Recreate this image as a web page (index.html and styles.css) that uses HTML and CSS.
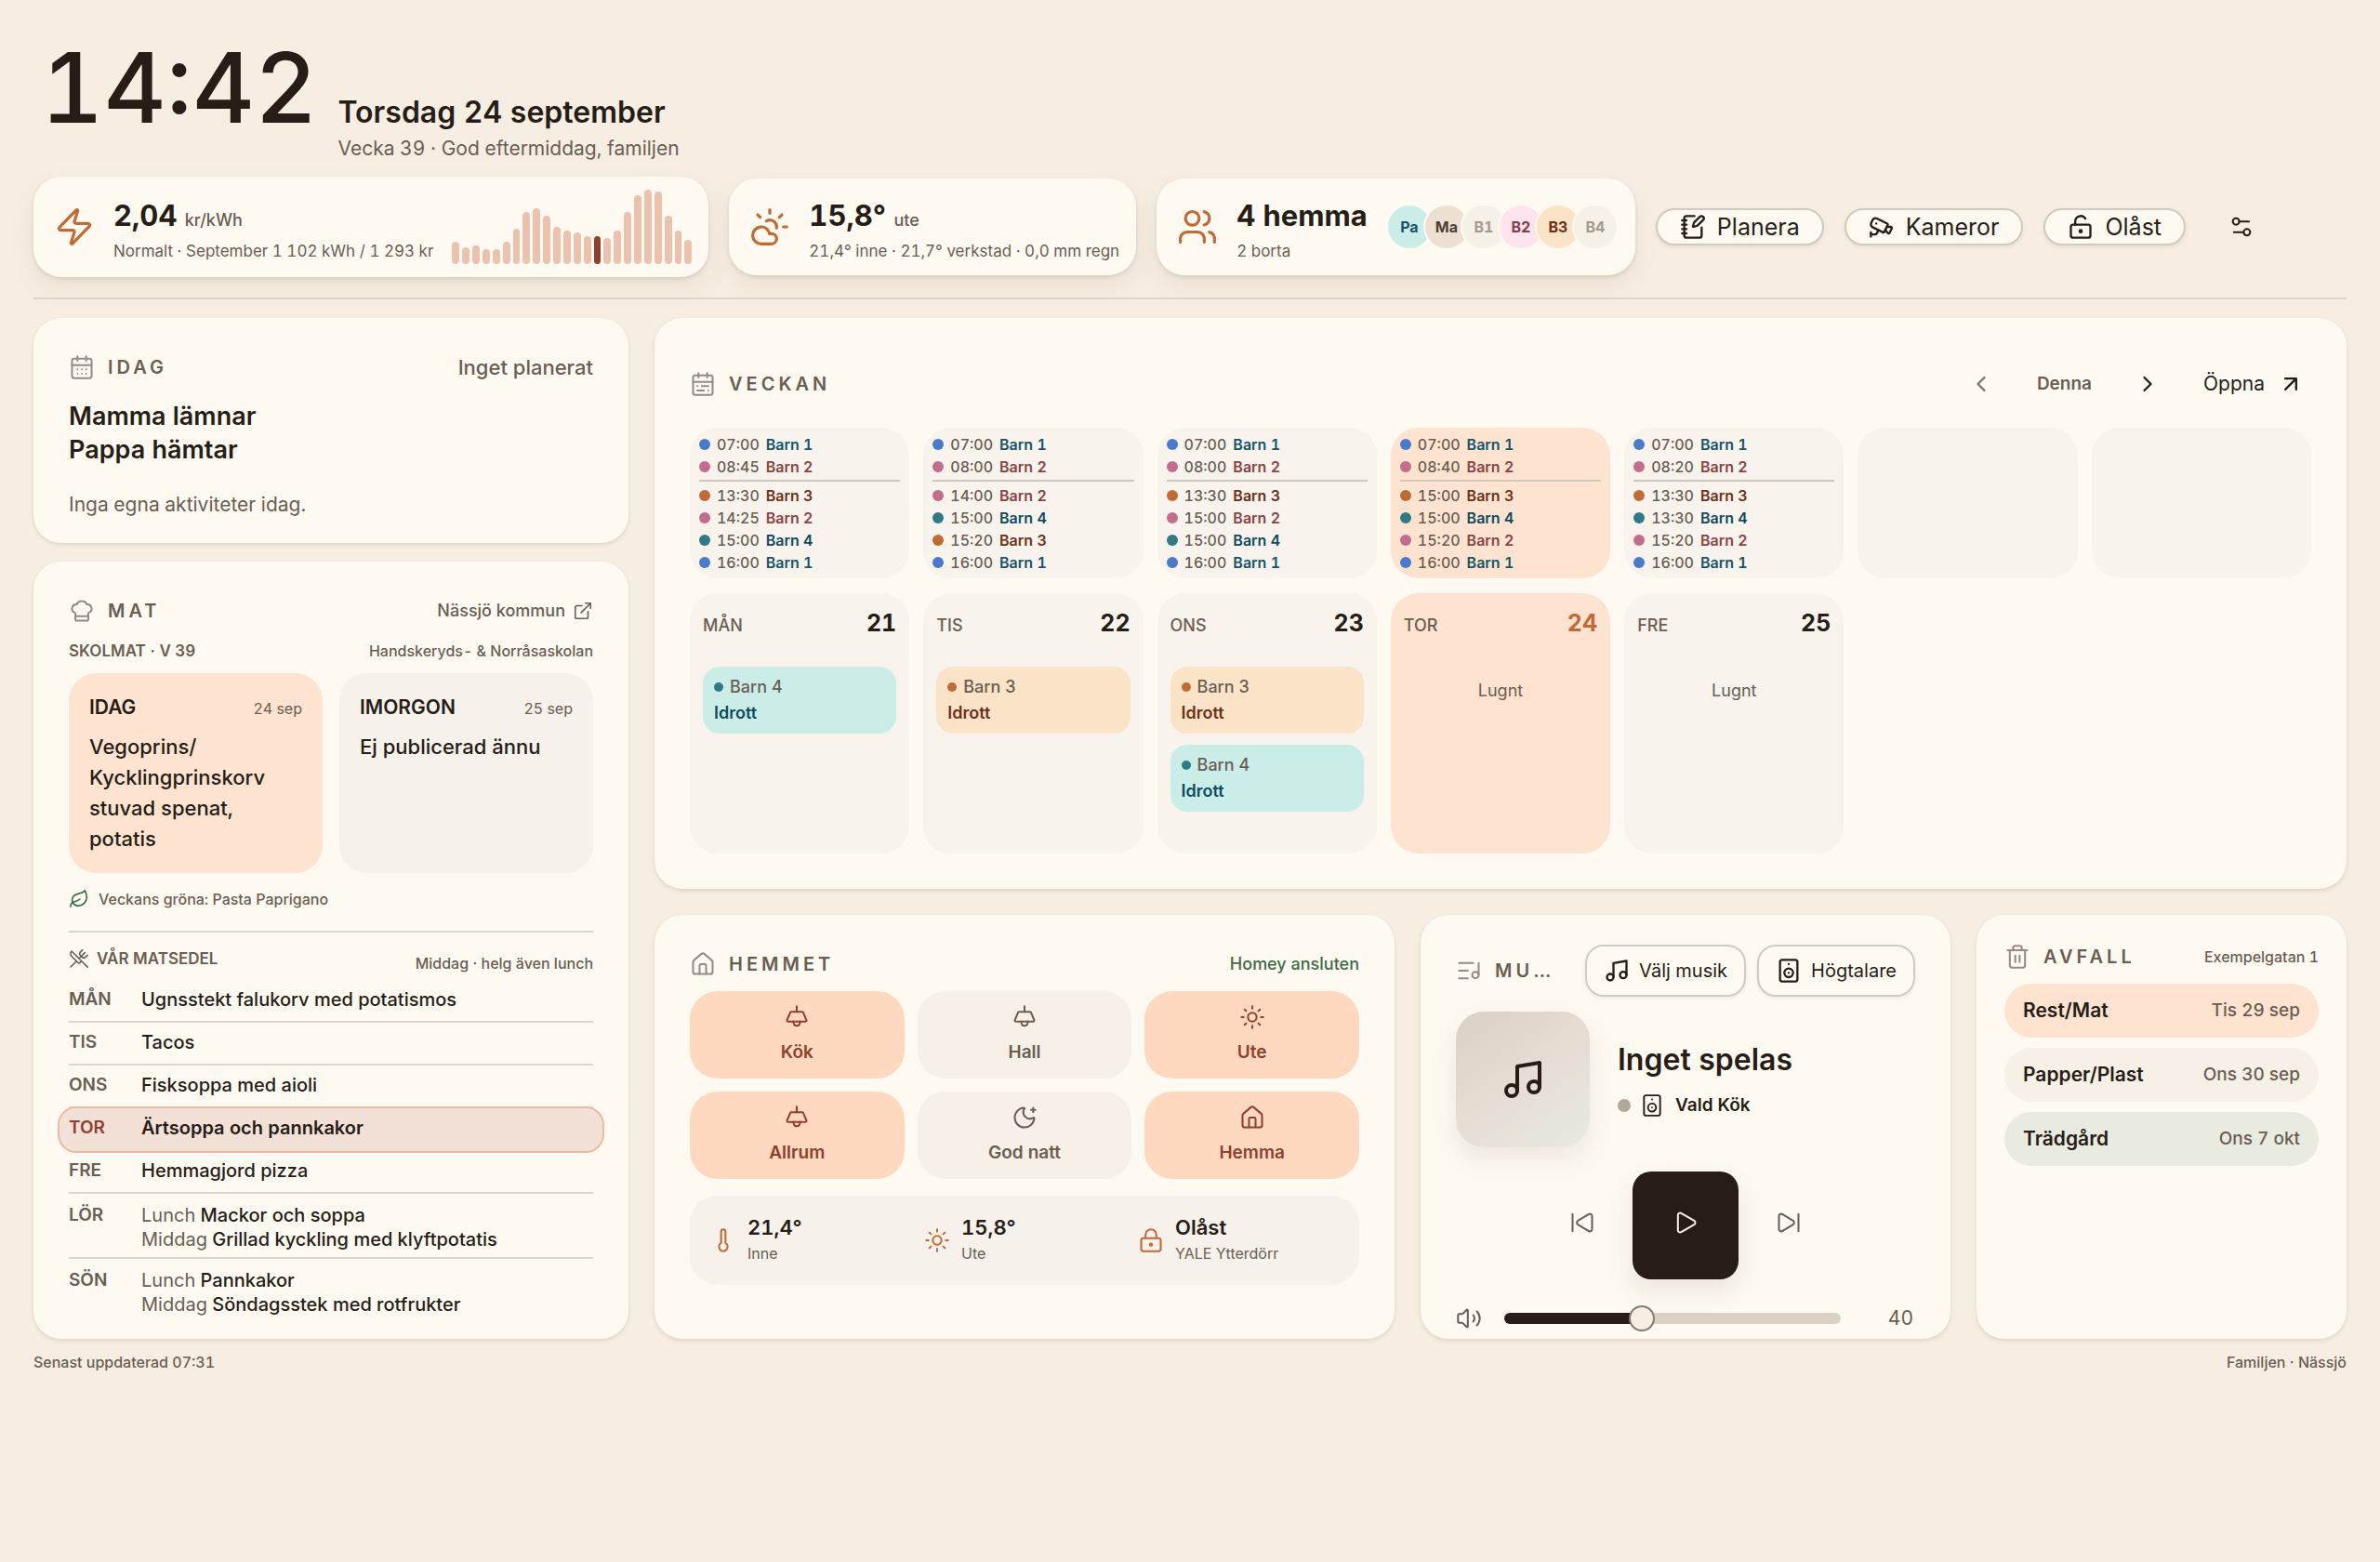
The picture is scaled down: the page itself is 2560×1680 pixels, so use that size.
FILE: index.html
```html
<!DOCTYPE html>
<html lang="sv">
<head>
    <meta charset="utf-8">
    <meta name="viewport" content="width=device-width, initial-scale=1">
    <title>Familjen</title>
    <link rel="stylesheet" href="styles.css">
</head>
<body>

<!-- Icon sprite -->
<svg class="sprite" aria-hidden="true">
    <symbol id="i-zap" viewBox="0 0 24 24"><path d="M4 14a1 1 0 0 1-.78-1.63l9.9-10.2a.5.5 0 0 1 .86.46l-1.92 6.02A1 1 0 0 0 13 10h7a1 1 0 0 1 .78 1.63l-9.9 10.2a.5.5 0 0 1-.86-.46l1.92-6.02A1 1 0 0 0 11 14z"/></symbol>
    <symbol id="i-cloud-sun" viewBox="0 0 24 24"><path d="M12 2v2M4.93 4.93l1.41 1.41M20 12h2M19.07 4.93l-1.41 1.41M15.947 12.65a4 4 0 0 0-5.925-4.128"/><path d="M13 22H7a5 5 0 1 1 4.9-6H13a3 3 0 0 1 0 6Z"/></symbol>
    <symbol id="i-users" viewBox="0 0 24 24"><path d="M16 21v-2a4 4 0 0 0-4-4H6a4 4 0 0 0-4 4v2"/><circle cx="9" cy="7" r="4"/><path d="M22 21v-2a4 4 0 0 0-3-3.87M16 3.13a4 4 0 0 1 0 7.75"/></symbol>
    <symbol id="i-notebook" viewBox="0 0 24 24"><path d="M13.4 2H6a2 2 0 0 0-2 2v16a2 2 0 0 0 2 2h12a2 2 0 0 0 2-2v-7.4M2 6h4M2 10h4M2 14h4M2 18h4"/><path d="M21.378 5.626a1 1 0 1 0-3.004-3.004l-5.01 5.012a2 2 0 0 0-.506.854l-.837 2.87a.5.5 0 0 0 .62.62l2.87-.837a2 2 0 0 0 .854-.506z"/></symbol>
    <symbol id="i-cctv" viewBox="0 0 24 24"><path d="M16.75 12h3.632a1 1 0 0 1 .894 1.447l-2.034 4.069a1 1 0 0 1-1.708.134l-2.124-2.97"/><path d="M17.106 9.053a1 1 0 0 1 .447 1.341l-3.106 6.211a1 1 0 0 1-1.342.447L3.61 12.3a2.92 2.92 0 0 1-1.3-3.91L3.69 5.6a2.92 2.92 0 0 1 3.92-1.3z"/><path d="M2 19h3.76a2 2 0 0 0 1.8-1.1L9 15M2 21v-4M7 9h.01"/></symbol>
    <symbol id="i-lock-open" viewBox="0 0 24 24"><circle cx="12" cy="16" r="1"/><rect width="18" height="12" x="3" y="10" rx="2"/><path d="M7 10V7a5 5 0 0 1 9.33-2.5"/></symbol>
    <symbol id="i-lock" viewBox="0 0 24 24"><circle cx="12" cy="16" r="1"/><rect width="18" height="12" x="3" y="10" rx="2"/><path d="M7 10V7a5 5 0 0 1 10 0v3"/></symbol>
    <symbol id="i-settings" viewBox="0 0 24 24"><path d="M14 17H5M19 7h-9"/><circle cx="17" cy="17" r="3"/><circle cx="7" cy="7" r="3"/></symbol>
    <symbol id="i-calendar" viewBox="0 0 24 24"><path d="M8 2v4M16 2v4M3 10h18"/><rect width="18" height="18" x="3" y="4" rx="2"/><path d="M8 14h.01M12 14h.01M16 14h.01M8 18h.01M12 18h.01M16 18h.01"/></symbol>
    <symbol id="i-calendar-range" viewBox="0 0 24 24"><path d="M8 2v4M16 2v4M3 10h18"/><rect width="18" height="18" x="3" y="4" rx="2"/><path d="M17 14h-6M13 18H7M7 14h.01M17 18h.01"/></symbol>
    <symbol id="i-chef" viewBox="0 0 24 24"><path d="M17 21a1 1 0 0 0 1-1v-5.35c0-.457.316-.844.727-1.041a4 4 0 0 0-2.134-7.589 5 5 0 0 0-9.186 0 4 4 0 0 0-2.134 7.588c.411.198.727.585.727 1.041V20a1 1 0 0 0 1 1ZM6 17h12"/></symbol>
    <symbol id="i-external" viewBox="0 0 24 24"><path d="M15 3h6v6M10 14 21 3M18 13v6a2 2 0 0 1-2 2H5a2 2 0 0 1-2-2V8a2 2 0 0 1 2-2h6"/></symbol>
    <symbol id="i-leaf" viewBox="0 0 24 24"><path d="M11 20A7 7 0 0 1 9.8 6.1C15.5 5 17 4.48 19 2c1 2 2 4.18 2 8 0 5.5-4.78 10-10 10Z"/><path d="M2 21c0-3 1.85-5.36 5.08-6C9.5 14.52 12 13 13 12"/></symbol>
    <symbol id="i-utensils" viewBox="0 0 24 24"><path d="m16 2-2.3 2.3a3 3 0 0 0 0 4.2l1.8 1.8a3 3 0 0 0 4.2 0L22 8"/><path d="M15 15 3.3 3.3a4.2 4.2 0 0 0 0 6l7.3 7.3c.7.7 2 .7 2.8 0L15 15Zm0 0 7 7M2.1 21.8l6.4-6.3M19 5l-7 7"/></symbol>
    <symbol id="i-left" viewBox="0 0 24 24"><path d="m15 18-6-6 6-6"/></symbol>
    <symbol id="i-right" viewBox="0 0 24 24"><path d="m9 18 6-6-6-6"/></symbol>
    <symbol id="i-arrow" viewBox="0 0 24 24"><path d="M7 7h10v10M7 17 17 7"/></symbol>
    <symbol id="i-house" viewBox="0 0 24 24"><path d="M15 21v-8a1 1 0 0 0-1-1h-4a1 1 0 0 0-1 1v8"/><path d="M3 10a2 2 0 0 1 .709-1.528l7-5.999a2 2 0 0 1 2.582 0l7 5.999A2 2 0 0 1 21 10v9a2 2 0 0 1-2 2H5a2 2 0 0 1-2-2z"/></symbol>
    <symbol id="i-lamp" viewBox="0 0 24 24"><path d="M12 2v5M14.829 15.998a3 3 0 1 1-5.658 0"/><path d="M20.92 14.606A1 1 0 0 1 20 16H4a1 1 0 0 1-.92-1.394l3-7A1 1 0 0 1 7 7h10a1 1 0 0 1 .92.606z"/></symbol>
    <symbol id="i-sun" viewBox="0 0 24 24"><circle cx="12" cy="12" r="4"/><path d="M12 2v2M12 20v2M4.93 4.93l1.41 1.41M17.66 17.66l1.41 1.41M2 12h2M20 12h2M6.34 17.66l-1.41 1.41M19.07 4.93l-1.41 1.41"/></symbol>
    <symbol id="i-moon" viewBox="0 0 24 24"><path d="M18 5h4M20 3v4M20.985 12.486a9 9 0 1 1-9.473-9.472c.405-.022.617.46.402.803a6 6 0 0 0 8.268 8.268c.344-.215.825-.004.803.401"/></symbol>
    <symbol id="i-thermo" viewBox="0 0 24 24"><path d="M14 4v10.54a4 4 0 1 1-4 0V4a2 2 0 0 1 4 0Z"/></symbol>
    <symbol id="i-list-music" viewBox="0 0 24 24"><path d="M16 5H3M11 12H3M11 19H3M21 16V5"/><circle cx="18" cy="16" r="3"/></symbol>
    <symbol id="i-music" viewBox="0 0 24 24"><path d="M9 18V5l12-2v13"/><circle cx="6" cy="18" r="3"/><circle cx="18" cy="16" r="3"/></symbol>
    <symbol id="i-speaker" viewBox="0 0 24 24"><rect width="16" height="20" x="4" y="2" rx="2"/><path d="M12 6h.01M12 14h.01"/><circle cx="12" cy="14" r="4"/></symbol>
    <symbol id="i-prev" viewBox="0 0 24 24"><path d="M17.971 4.285A2 2 0 0 1 21 6v12a2 2 0 0 1-3.029 1.715l-9.997-5.998a2 2 0 0 1-.003-3.432zM3 20V4"/></symbol>
    <symbol id="i-next" viewBox="0 0 24 24"><path d="M6.029 4.285A2 2 0 0 0 3 6v12a2 2 0 0 0 3.029 1.715l9.997-5.998a2 2 0 0 0 .003-3.432zM21 4v16"/></symbol>
    <symbol id="i-play" viewBox="0 0 24 24"><path d="M5 5a2 2 0 0 1 3.008-1.728l11.997 6.998a2 2 0 0 1 .003 3.458l-12 7A2 2 0 0 1 5 19z"/></symbol>
    <symbol id="i-volume" viewBox="0 0 24 24"><path d="M11 4.702a.705.705 0 0 0-1.203-.498L6.413 7.587A1.4 1.4 0 0 1 5.416 8H3a1 1 0 0 0-1 1v6a1 1 0 0 0 1 1h2.416a1.4 1.4 0 0 1 .997.413l3.383 3.384A.705.705 0 0 0 11 19.298zM16 9a5 5 0 0 1 0 6M19.364 18.364a9 9 0 0 0 0-12.728"/></symbol>
    <symbol id="i-trash" viewBox="0 0 24 24"><path d="M10 11v6M14 11v6M19 6v14a2 2 0 0 1-2 2H7a2 2 0 0 1-2-2V6M3 6h18M8 6V4a2 2 0 0 1 2-2h4a2 2 0 0 1 2 2v2"/></symbol>
</svg>

<div class="page">

    <!-- Clock and status chips -->
    <header class="top">
        <div class="now">
            <time class="clock">14:42</time>
            <div class="date">
                <h1>Torsdag 24 september</h1>
                <p>Vecka 39 · God eftermiddag, familjen</p>
            </div>
        </div>

        <div class="status">
            <section class="chip chip-power">
                <svg class="icon icon-chip"><use href="#i-zap"/></svg>
                <div class="chip-text">
                    <p class="chip-value">2,04 <small>kr/kWh</small></p>
                    <p class="chip-sub">Normalt · September 1 102 kWh / 1 293 kr</p>
                </div>
                <div class="bars">
                    <span style="height:30%"></span><span style="height:22%"></span><span style="height:25%"></span><span style="height:20%"></span><span style="height:20%"></span><span style="height:30%"></span><span style="height:48%"></span><span style="height:70%"></span><span style="height:75%"></span><span style="height:65%"></span><span style="height:50%"></span><span style="height:45%"></span><span style="height:43%"></span><span style="height:38%"></span><span class="now-bar" style="height:38%"></span><span style="height:35%"></span><span style="height:45%"></span><span style="height:70%"></span><span style="height:92%"></span><span style="height:100%"></span><span style="height:97%"></span><span style="height:65%"></span><span style="height:45%"></span><span style="height:32%"></span>
                </div>
            </section>

            <section class="chip">
                <svg class="icon icon-chip"><use href="#i-cloud-sun"/></svg>
                <div class="chip-text">
                    <p class="chip-value">15,8° <small>ute</small></p>
                    <p class="chip-sub">21,4° inne · 21,7° verkstad · 0,0 mm regn</p>
                </div>
            </section>

            <section class="chip">
                <svg class="icon icon-chip"><use href="#i-users"/></svg>
                <div class="chip-text">
                    <p class="chip-value">4 hemma</p>
                    <p class="chip-sub">2 borta</p>
                </div>
                <div class="people">
                    <span class="person teal">Pa</span>
                    <span class="person sand">Ma</span>
                    <span class="person away">B1</span>
                    <span class="person pink">B2</span>
                    <span class="person amber">B3</span>
                    <span class="person away">B4</span>
                </div>
            </section>

            <button class="pill" type="button"><svg class="icon"><use href="#i-notebook"/></svg>Planera</button>
            <button class="pill" type="button"><svg class="icon"><use href="#i-cctv"/></svg>Kameror</button>
            <button class="pill" type="button"><svg class="icon"><use href="#i-lock-open"/></svg>Olåst</button>
            <button class="ghost" type="button" aria-label="Inställningar"><svg class="icon"><use href="#i-settings"/></svg></button>
        </div>
    </header>

    <main class="board">
        <div class="side">

            <section class="card today">
                <div class="card-head">
                    <h2><svg class="icon"><use href="#i-calendar"/></svg>IDAG</h2>
                    <span class="head-note big">Inget planerat</span>
                </div>
                <p class="who">Mamma lämnar</p>
                <p class="who">Pappa hämtar</p>
                <p class="none">Inga egna aktiviteter idag.</p>
            </section>

            <section class="card food">
                <div class="card-head">
                    <h2><svg class="icon"><use href="#i-chef"/></svg>MAT</h2>
                    <a class="head-link" href="#">Nässjö kommun <svg class="icon"><use href="#i-external"/></svg></a>
                </div>
                <div class="sub-head">
                    <h3>SKOLMAT · V 39</h3>
                    <span>Handskeryds- &amp; Norråsaskolan</span>
                </div>
                <div class="school">
                    <article class="meal is-today">
                        <header><h4>IDAG</h4><time>24 sep</time></header>
                        <p>Vegoprins/<wbr> Kycklingprinskorv stuvad spenat, potatis</p>
                    </article>
                    <article class="meal">
                        <header><h4>IMORGON</h4><time>25 sep</time></header>
                        <p>Ej publicerad ännu</p>
                    </article>
                </div>
                <p class="green"><svg class="icon"><use href="#i-leaf"/></svg>Veckans gröna: Pasta Paprigano</p>

                <div class="sub-head ours">
                    <h3><svg class="icon"><use href="#i-utensils"/></svg>VÅR MATSEDEL</h3>
                    <span>Middag · helg även lunch</span>
                </div>
                <ul class="menu">
                    <li><b>MÅN</b><div>Ugnsstekt falukorv med potatismos</div></li>
                    <li><b>TIS</b><div>Tacos</div></li>
                    <li><b>ONS</b><div>Fisksoppa med aioli</div></li>
                    <li class="is-today"><b>TOR</b><div>Ärtsoppa och pannkakor</div></li>
                    <li><b>FRE</b><div>Hemmagjord pizza</div></li>
                    <li class="weekend"><b>LÖR</b><div><span>Lunch</span> Mackor och soppa<br><span>Middag</span> Grillad kyckling med klyftpotatis</div></li>
                    <li class="weekend"><b>SÖN</b><div><span>Lunch</span> Pannkakor<br><span>Middag</span> Söndagsstek med rotfrukter</div></li>
                </ul>
            </section>
        </div>

        <div class="content">

            <section class="card week">
                <div class="card-head">
                    <h2><svg class="icon"><use href="#i-calendar-range"/></svg>VECKAN</h2>
                    <nav class="week-nav">
                        <button type="button" aria-label="Föregående vecka" disabled><svg class="icon"><use href="#i-left"/></svg></button>
                        <button class="this-week" type="button">Denna</button>
                        <button type="button" aria-label="Nästa vecka"><svg class="icon"><use href="#i-right"/></svg></button>
                        <a href="#">Öppna <svg class="icon"><use href="#i-arrow"/></svg></a>
                    </nav>
                </div>

                <div class="days">
                    <ul class="times">
                        <li class="b1"><time>07:00</time><b>Barn 1</b></li>
                        <li class="b2"><time>08:45</time><b>Barn 2</b></li>
                        <li class="b3 split"><time>13:30</time><b>Barn 3</b></li>
                        <li class="b2"><time>14:25</time><b>Barn 2</b></li>
                        <li class="b4"><time>15:00</time><b>Barn 4</b></li>
                        <li class="b1"><time>16:00</time><b>Barn 1</b></li>
                    </ul>
                    <ul class="times">
                        <li class="b1"><time>07:00</time><b>Barn 1</b></li>
                        <li class="b2"><time>08:00</time><b>Barn 2</b></li>
                        <li class="b2 split"><time>14:00</time><b>Barn 2</b></li>
                        <li class="b4"><time>15:00</time><b>Barn 4</b></li>
                        <li class="b3"><time>15:20</time><b>Barn 3</b></li>
                        <li class="b1"><time>16:00</time><b>Barn 1</b></li>
                    </ul>
                    <ul class="times">
                        <li class="b1"><time>07:00</time><b>Barn 1</b></li>
                        <li class="b2"><time>08:00</time><b>Barn 2</b></li>
                        <li class="b3 split"><time>13:30</time><b>Barn 3</b></li>
                        <li class="b2"><time>15:00</time><b>Barn 2</b></li>
                        <li class="b4"><time>15:00</time><b>Barn 4</b></li>
                        <li class="b1"><time>16:00</time><b>Barn 1</b></li>
                    </ul>
                    <ul class="times is-today">
                        <li class="b1"><time>07:00</time><b>Barn 1</b></li>
                        <li class="b2"><time>08:40</time><b>Barn 2</b></li>
                        <li class="b3 split"><time>15:00</time><b>Barn 3</b></li>
                        <li class="b4"><time>15:00</time><b>Barn 4</b></li>
                        <li class="b2"><time>15:20</time><b>Barn 2</b></li>
                        <li class="b1"><time>16:00</time><b>Barn 1</b></li>
                    </ul>
                    <ul class="times">
                        <li class="b1"><time>07:00</time><b>Barn 1</b></li>
                        <li class="b2"><time>08:20</time><b>Barn 2</b></li>
                        <li class="b3 split"><time>13:30</time><b>Barn 3</b></li>
                        <li class="b4"><time>13:30</time><b>Barn 4</b></li>
                        <li class="b2"><time>15:20</time><b>Barn 2</b></li>
                        <li class="b1"><time>16:00</time><b>Barn 1</b></li>
                    </ul>
                    <div class="times"></div>
                    <div class="times"></div>

                    <article class="day">
                        <header><span>MÅN</span><strong>21</strong></header>
                        <div class="event b4"><p>Barn 4</p><b>Idrott</b></div>
                    </article>
                    <article class="day">
                        <header><span>TIS</span><strong>22</strong></header>
                        <div class="event b3"><p>Barn 3</p><b>Idrott</b></div>
                    </article>
                    <article class="day">
                        <header><span>ONS</span><strong>23</strong></header>
                        <div class="event b3"><p>Barn 3</p><b>Idrott</b></div>
                        <div class="event b4"><p>Barn 4</p><b>Idrott</b></div>
                    </article>
                    <article class="day is-today">
                        <header><span>TOR</span><strong>24</strong></header>
                        <p class="calm">Lugnt</p>
                    </article>
                    <article class="day">
                        <header><span>FRE</span><strong>25</strong></header>
                        <p class="calm">Lugnt</p>
                    </article>
                </div>
            </section>

            <div class="bottom">

                <section class="card home">
                    <div class="card-head">
                        <h2><svg class="icon"><use href="#i-house"/></svg>HEMMET</h2>
                        <span class="online">Homey ansluten</span>
                    </div>
                    <div class="tiles">
                        <button class="tile on" type="button"><svg class="icon"><use href="#i-lamp"/></svg>Kök</button>
                        <button class="tile" type="button"><svg class="icon"><use href="#i-lamp"/></svg>Hall</button>
                        <button class="tile on" type="button"><svg class="icon"><use href="#i-sun"/></svg>Ute</button>
                        <button class="tile on" type="button"><svg class="icon"><use href="#i-lamp"/></svg>Allrum</button>
                        <button class="tile" type="button"><svg class="icon"><use href="#i-moon"/></svg>God natt</button>
                        <button class="tile on" type="button"><svg class="icon"><use href="#i-house"/></svg>Hemma</button>
                    </div>
                    <div class="sensors">
                        <div><svg class="icon"><use href="#i-thermo"/></svg><p><b>21,4°</b><span>Inne</span></p></div>
                        <div><svg class="icon"><use href="#i-sun"/></svg><p><b>15,8°</b><span>Ute</span></p></div>
                        <div><svg class="icon"><use href="#i-lock"/></svg><p><b>Olåst</b><span>YALE Ytterdörr</span></p></div>
                    </div>
                </section>

                <section class="card music">
                    <div class="card-head">
                        <h2><svg class="icon"><use href="#i-list-music"/></svg><span>MUSIK</span></h2>
                        <div class="music-buttons">
                            <button type="button"><svg class="icon"><use href="#i-music"/></svg>Välj musik</button>
                            <button type="button"><svg class="icon"><use href="#i-speaker"/></svg>Högtalare</button>
                        </div>
                    </div>
                    <div class="track">
                        <div class="cover"><svg class="icon"><use href="#i-music"/></svg></div>
                        <div>
                            <h3>Inget spelas</h3>
                            <p><i class="dot"></i><svg class="icon"><use href="#i-speaker"/></svg>Vald Kök</p>
                        </div>
                    </div>
                    <div class="controls">
                        <button type="button" aria-label="Föregående"><svg class="icon"><use href="#i-prev"/></svg></button>
                        <button class="play" type="button" aria-label="Spela"><svg class="icon"><use href="#i-play"/></svg></button>
                        <button type="button" aria-label="Nästa"><svg class="icon"><use href="#i-next"/></svg></button>
                    </div>
                    <div class="volume">
                        <label for="volume" aria-label="Volym"><svg class="icon"><use href="#i-volume"/></svg></label>
                        <input id="volume" type="range" min="0" max="100" value="40">
                        <output for="volume">40</output>
                    </div>
                </section>

                <section class="card waste">
                    <div class="card-head">
                        <h2><svg class="icon"><use href="#i-trash"/></svg>AVFALL</h2>
                        <span class="head-note">Exempelgatan 1</span>
                    </div>
                    <ul>
                        <li class="next"><b>Rest/Mat</b><time>Tis 29 sep</time></li>
                        <li><b>Papper/Plast</b><time>Ons 30 sep</time></li>
                        <li class="garden"><b>Trädgård</b><time>Ons 7 okt</time></li>
                    </ul>
                </section>
            </div>
        </div>
    </main>

    <footer class="foot">
        <span>Senast uppdaterad 07:31</span>
        <span>Familjen · Nässjö</span>
    </footer>
</div>

</body>
</html>
```
FILE: styles.css
```css
:root {
    --bg: #f7eee3;
    --card: #fefaf2;
    --ink: #261d17;
    --muted: #6a5d52;
    --line: #dfd6cb;
    --soft: #f8f3ec;
    --peach: #fee3d1;
    --rust: #c06a35;
    --brick: #8f3f2d;
    --teal: #cbede8;
    --amber: #fae3c7;
}

* {
    box-sizing: border-box;
}

body {
    margin: 0;
    background: var(--bg);
    color: var(--ink);
    font-family: Inter, "Open Sans", sans-serif;
    font-size: 18px;
    line-height: 24px;
    font-variant-numeric: tabular-nums;
}

h1, h2, h3, h4, p, ul {
    margin: 0;
    padding: 0;
    font-weight: inherit;
}

ul {
    list-style: none;
}

a {
    color: inherit;
    text-decoration: none;
}

button {
    padding: 0;
    border: 0;
    background: none;
    color: inherit;
    font: inherit;
    cursor: pointer;
}

.sprite {
    display: none;
}

.icon {
    flex: none;
    width: 28px;
    height: 28px;
    fill: none;
    stroke: currentColor;
    stroke-width: 1.75;
    stroke-linecap: round;
    stroke-linejoin: round;
}

.page {
    padding: 38px 36px 0;
}

/* Clock and status chips */
.top {
    padding-bottom: 22px;
    border-bottom: 2px solid var(--line);
    margin-bottom: 20px;
}

.now {
    display: flex;
    align-items: baseline;
    gap: 22px;
    height: 152px;
    padding-left: 8px;
}

.clock {
    font-size: 104px;
    line-height: 112px;
    font-weight: 500;
}

.date h1 {
    font-size: 32px;
    line-height: 40px;
    font-weight: 600;
}

.date p {
    color: var(--muted);
    font-size: 21px;
    line-height: 38px;
}

.status {
    display: flex;
    align-items: center;
    gap: 22px;
}

.chip {
    display: flex;
    align-items: center;
    gap: 20px;
    min-height: 104px;
    padding: 12px 18px 12px 22px;
    border-radius: 30px;
    background: var(--card);
    box-shadow: 0 2px 4px rgba(90, 60, 40, .14), 0 12px 28px rgba(90, 60, 40, .08);
    white-space: nowrap;
}

.chip-power {
    padding-top: 14px;
    padding-bottom: 14px;
}

.icon-chip {
    width: 44px;
    height: 44px;
    color: var(--rust);
}

.chip-text {
    display: grid;
    gap: 8px;
    padding-top: 8px;
}

.chip-value {
    font-size: 31px;
    line-height: 36px;
    font-weight: 700;
}

.chip-value small {
    color: var(--muted);
    font-size: 18px;
    line-height: 18px;
    font-weight: 500;
}

.chip-sub {
    color: var(--muted);
    font-size: 17px;
    line-height: 24px;
}

.bars {
    display: flex;
    align-items: flex-end;
    gap: 3px;
    width: 258px;
    height: 80px;
}

.bars span {
    flex: 1;
    border-radius: 4px;
    background: #eac2ae;
}

.bars .now-bar {
    background: var(--brick);
}

.people {
    display: flex;
}

.person {
    width: 50px;
    height: 50px;
    margin-right: -10px;
    border: 2px solid var(--card);
    border-radius: 50%;
    font-size: 16px;
    line-height: 46px;
    font-weight: 700;
    text-align: center;
}

.person:last-child {
    margin-right: 0;
}

.person.teal { background: var(--teal); color: #14556a; }
.person.sand { background: #eedfd3; color: #4d4036; }
.person.pink { background: #ffe3ee; color: #7d4248; }
.person.amber { background: var(--amber); color: #6f2f17; }
.person.away { background: #f5f1e7; color: #a39b90; }

.pill {
    display: flex;
    align-items: center;
    gap: 12px;
    height: 40px;
    padding: 0 24px;
    border: 2px solid #d3c9bd;
    border-radius: 20px;
    background: var(--card);
    box-shadow: 0 2px 4px rgba(90, 60, 40, .1);
    font-size: 25px;
}

.pill .icon,
.music-buttons .icon {
    stroke-width: 2;
}

.ghost {
    display: flex;
    padding: 8px 24px;
}

/* Board */
.board {
    display: grid;
    grid-template-columns: minmax(0, 32fr) minmax(0, 91fr);
    gap: 28px;
}

.side {
    display: flex;
    flex-direction: column;
    gap: 20px;
}

.content {
    display: grid;
    grid-template-rows: auto 1fr;
    gap: 28px;
}

.card {
    padding: 38px;
    border-radius: 30px;
    background: var(--card);
    box-shadow: 0 2px 4px rgba(90, 60, 40, .16);
}

.card-head {
    display: flex;
    align-items: center;
    justify-content: space-between;
    gap: 16px;
}

.card-head h2 {
    display: flex;
    align-items: center;
    gap: 14px;
    color: var(--muted);
    font-size: 20px;
    line-height: 30px;
    font-weight: 600;
    letter-spacing: 4px;
}

.card-head h2 .icon {
    opacity: .7;
}

.head-note {
    color: var(--muted);
    font-size: 16px;
    font-weight: 500;
}

.head-note.big {
    font-size: 22px;
}

/* Today */
.today {
    padding-bottom: 24px;
}

.who {
    font-size: 27px;
    line-height: 36px;
    font-weight: 600;
}

.today .card-head {
    margin-bottom: 20px;
}

.none {
    margin-top: 24px;
    color: var(--muted);
    font-size: 21px;
    line-height: 34px;
}

/* Food */
.food {
    flex: 1;
    padding-bottom: 15px;
}

.head-link {
    display: flex;
    align-items: center;
    gap: 8px;
    color: var(--muted);
    font-size: 18px;
    font-weight: 500;
}

.head-link .icon {
    width: 22px;
    height: 22px;
}

.sub-head {
    display: flex;
    align-items: baseline;
    justify-content: space-between;
    margin-top: 16px;
    color: var(--muted);
    font-size: 16px;
    font-weight: 500;
}

.sub-head h3 {
    display: flex;
    align-items: center;
    gap: 8px;
    font-size: 17px;
    font-weight: 600;
}

.sub-head .icon,
.green .icon {
    width: 22px;
    height: 22px;
}

.school {
    display: grid;
    grid-template-columns: 1fr 1fr;
    gap: 18px;
    margin-top: 12px;
}

.meal {
    padding: 22px 22px 20px;
    border-radius: 30px;
    background: #f6f1eb;
}

.meal.is-today {
    background: var(--peach);
}

.meal header {
    display: flex;
    align-items: baseline;
    justify-content: space-between;
    margin-bottom: 10px;
    line-height: 30px;
}

.meal h4 {
    font-size: 21px;
    font-weight: 600;
}

.meal time {
    color: var(--muted);
    font-size: 16px;
}

.meal p {
    font-size: 22px;
    line-height: 33px;
    font-weight: 500;
}

.green {
    display: flex;
    align-items: center;
    gap: 10px;
    margin-top: 16px;
    color: var(--muted);
    font-size: 16px;
    font-weight: 500;
}

.green .icon {
    color: #2f6b3c;
}

.sub-head.ours {
    margin-top: 22px;
    padding-top: 16px;
    border-top: 2px solid var(--line);
}

.menu {
    margin-top: 6px;
}

.menu li {
    display: grid;
    grid-template-columns: 78px 1fr;
    min-height: 46px;
    padding-top: 8px;
    border-bottom: 2px solid var(--line);
    font-size: 20px;
    line-height: 26px;
    font-weight: 500;
}

.menu li:last-child {
    border-bottom: 0;
}

.menu b {
    color: var(--muted);
    font-size: 19px;
    font-weight: 600;
}

.menu span {
    color: var(--muted);
    font-weight: 400;
}

.menu .is-today {
    margin: -2px -12px;
    min-height: 50px;
    padding: 8px 10px 0;
    border: 2px solid #e8bba5;
    border-radius: 20px;
    background: #f3e1d7;
    font-weight: 600;
}

.menu .is-today b {
    color: var(--brick);
}

.menu .weekend {
    padding: 10px 0 6px;
}

/* Week */
.week .card-head {
    min-height: 66px;
}

.week-nav {
    display: flex;
    align-items: center;
    gap: 46px;
    padding-right: 8px;
    font-size: 21px;
}

.week-nav button {
    display: flex;
}

.week-nav button:disabled {
    opacity: .6;
}

.week-nav .this-week {
    color: var(--muted);
    font-size: 19px;
    font-weight: 600;
}

.week-nav .icon {
    stroke-width: 2;
}

.week-nav a {
    display: flex;
    align-items: center;
    gap: 14px;
}

.days {
    display: grid;
    grid-template-columns: repeat(7, minmax(0, 1fr));
    gap: 16px 15px;
    margin-top: 14px;
}

.times {
    min-height: 162px;
    padding: 6px 10px 5px;
    border-radius: 30px;
    background: var(--soft);
    font-size: 16px;
    line-height: 24px;
}

.times li {
    display: flex;
    align-items: center;
    gap: 7px;
}

.times li::before,
.event p::before {
    content: "";
    width: 12px;
    height: 12px;
    border-radius: 50%;
    background: var(--who);
}

.times time {
    color: var(--muted);
    font-weight: 500;
}

.times b {
    color: var(--name);
    font-weight: 600;
}

.times .split {
    margin-top: 2px;
    padding-top: 3px;
    border-top: 2px solid #d0c7bb;
}

.b1 { --who: #4a7acb; --name: #14556a; }
.b2 { --who: #c26c8e; --name: #8a4344; }
.b3 { --who: #c06a35; --name: #6f2f17; --fill: var(--amber); }
.b4 { --who: #2f7a86; --name: #0f4a60; --fill: var(--teal); }

.day {
    min-height: 280px;
    padding: 16px 14px;
    border-radius: 30px;
    background: var(--soft);
}

.times.is-today,
.day.is-today {
    background: var(--peach);
}

.day header {
    display: flex;
    align-items: baseline;
    justify-content: space-between;
    margin-bottom: 28px;
    line-height: 32px;
}

.day header span {
    color: var(--muted);
    font-weight: 500;
}

.day header strong {
    font-size: 25px;
    font-weight: 700;
}

.day.is-today strong {
    color: var(--rust);
}

.event {
    padding: 8px 12px;
    border-radius: 18px;
    background: var(--fill);
    color: var(--name);
    font-size: 18px;
    line-height: 28px;
}

.event + .event {
    margin-top: 12px;
}

.event p {
    display: flex;
    align-items: center;
    gap: 7px;
    color: var(--muted);
    font-weight: 500;
}

.event p::before {
    width: 10px;
    height: 10px;
}

.event b {
    display: block;
    font-weight: 600;
}

.calm {
    padding-top: 14px;
    color: var(--muted);
    text-align: center;
}

/* Bottom row */
.bottom {
    display: grid;
    grid-template-columns: minmax(0, 398fr) minmax(0, 285fr) minmax(0, 199fr);
    gap: 28px;
}

.online {
    color: #3d6b45;
    font-size: 18px;
    font-weight: 500;
}

.tiles {
    display: grid;
    grid-template-columns: repeat(3, 1fr);
    gap: 14px;
    margin-top: 14px;
}

.tile {
    display: flex;
    flex-direction: column;
    align-items: center;
    gap: 10px;
    height: 94px;
    padding-top: 14px;
    border-radius: 30px;
    background: #f6f0e6;
    color: var(--muted);
    font-size: 19px;
    line-height: 28px;
    font-weight: 600;
}

.tile.on {
    background: #fed9c0;
    color: var(--brick);
}

.sensors {
    display: grid;
    grid-template-columns: repeat(3, 1fr);
    gap: 14px;
    margin-top: 18px;
    padding: 20px 22px;
    border-radius: 30px;
    background: #f6f1eb;
}

.sensors div {
    display: flex;
    align-items: center;
    gap: 12px;
}

.sensors .icon {
    color: var(--rust);
}

.sensors p {
    display: grid;
    line-height: 28px;
}

.sensors b {
    font-size: 22px;
    font-weight: 600;
}

.sensors span {
    color: var(--muted);
    font-size: 16px;
}

/* Music */
.music {
    padding: 32px 38px 8px;
}

.music .card-head {
    gap: 24px;
}

.music h2 {
    flex: 1;
    min-width: 0;
}

.music h2 span {
    overflow: hidden;
    text-overflow: ellipsis;
}

.music-buttons {
    display: flex;
    gap: 12px;
}

.music-buttons button {
    display: flex;
    align-items: center;
    gap: 10px;
    height: 56px;
    padding: 0 18px;
    border: 2px solid #d3c9bd;
    border-radius: 20px;
    box-shadow: 0 2px 4px rgba(90, 60, 40, .08);
    font-size: 20px;
}

.track {
    display: flex;
    gap: 30px;
    align-items: center;
    margin-top: 16px;
}

.cover {
    display: grid;
    place-items: center;
    width: 144px;
    height: 146px;
    border-radius: 30px;
    background: linear-gradient(145deg, #d9d0c6, #e6ddd3 50%, #e9eae0);
    box-shadow: 0 12px 28px rgba(90, 60, 40, .1);
}

.cover .icon {
    width: 48px;
    height: 48px;
    stroke-width: 2;
}

.track h3 {
    font-size: 32px;
    line-height: 40px;
    font-weight: 600;
}

.track p {
    display: flex;
    align-items: center;
    margin-top: 16px;
    font-size: 19px;
    font-weight: 600;
}

.track .dot {
    width: 14px;
    height: 14px;
    border-radius: 50%;
    background: #b0a79d;
}

.track p .icon {
    width: 26px;
    height: 26px;
    margin: 0 12px 0 10px;
}

.controls {
    display: flex;
    align-items: center;
    justify-content: center;
    gap: 40px;
    margin-top: 26px;
    color: var(--muted);
}

.controls .play {
    width: 114px;
    height: 116px;
    border-radius: 20px;
    background: var(--ink);
    box-shadow: 0 12px 28px rgba(90, 60, 40, .12);
    color: var(--bg);
}

.volume {
    display: grid;
    grid-template-columns: 30px 1fr 58px;
    align-items: center;
    gap: 0 22px;
    margin-top: 28px;
    color: var(--muted);
    font-size: 21px;
}

.volume label {
    display: flex;
}

.volume output {
    padding-right: 2px;
    text-align: right;
}

.volume input {
    appearance: none;
    width: 100%;
    height: 12px;
    margin: 0;
    border-radius: 6px;
    background: linear-gradient(to right, var(--ink) 40%, #d9d0c6 40%);
}

.volume input::-webkit-slider-thumb {
    appearance: none;
    width: 28px;
    height: 28px;
    border: 2px solid #857a70;
    border-radius: 50%;
    background: var(--bg);
}

/* Waste */
.waste {
    padding: 30px;
}

.waste ul {
    display: grid;
    gap: 11px;
    margin-top: 14px;
}

.waste li {
    display: flex;
    align-items: center;
    justify-content: space-between;
    height: 58px;
    padding: 0 20px;
    border-radius: 29px;
    background: #f6f0e6;
}

.waste li.next { background: var(--peach); }
.waste li.garden { background: #e9eae0; }

.waste b {
    font-size: 21px;
    font-weight: 600;
}

.waste time {
    color: var(--muted);
    font-size: 19px;
    font-weight: 500;
}

.foot {
    display: flex;
    justify-content: space-between;
    margin-top: 13px;
    color: var(--muted);
    font-size: 16px;
    font-weight: 500;
}
```
